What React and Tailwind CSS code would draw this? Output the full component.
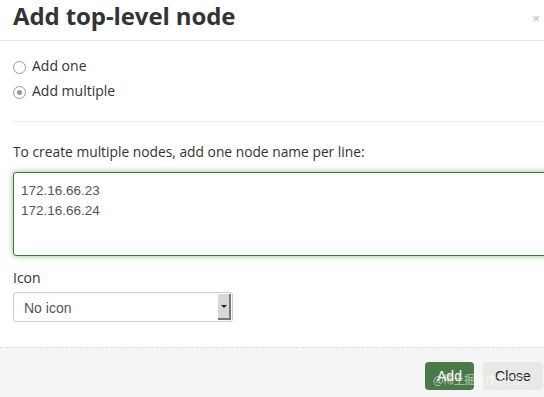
import React from 'react';

export default function App() {
  return (
    <div className="w-[544px] h-[397px] overflow-hidden bg-white text-[#333]" style={{ fontFamily: '"Open Sans", sans-serif' }}>
      <div className="w-[580px]">
        {/* Header */}
        <div className="h-[41px] border-b border-[#e5e5e5] flex items-center justify-between pl-[13px] pr-[40px]">
          <h1 className="text-[24px] font-bold leading-none tracking-[-0.1px] text-[#333] -mt-[8px]">Add top-level node</h1>
          <span className="text-[13px] text-[#c8c8c8] font-bold leading-none -mt-[4px]">×</span>
        </div>

        {/* Body */}
        <div className="pl-[13px] pt-[15px]">
          <div className="flex flex-col gap-[7px] text-[14px] text-[#333]">
            <label className="flex items-center gap-[6px] h-[18px]">
              <span className="w-[13px] h-[13px] rounded-full border border-[#999] bg-white mt-[4px]" />
              <span>Add one</span>
            </label>
            <label className="flex items-center gap-[6px] h-[18px]">
              <span className="w-[13px] h-[13px] rounded-full border border-[#999] bg-white flex items-center justify-center mt-[4px]">
                <span className="w-[5px] h-[5px] rounded-full bg-[#999]" />
              </span>
              <span>Add multiple</span>
            </label>
          </div>

          <div className="mt-[22px] border-t border-[#eee]" />

          <p className="text-[13.8px] mt-[20px] leading-[20px]">To create multiple nodes, add one node name per line:</p>

          <div
            className="mt-[10px] h-[84px] rounded-[3px] border border-[#3c763d] px-[7px] pt-[8px] text-[13.5px] leading-[20px] text-[#555] shadow-[0_0_6px_#8fbf8f]"
            style={{ fontFamily: '"Liberation Sans", Arial, sans-serif' }}
          >
            <div>172.16.66.23</div>
            <div>172.16.66.24</div>
          </div>

          <p className="text-[14px] mt-[12px] leading-[20px]">Icon</p>

          <div className="mt-[4px] w-[220px] h-[30px] flex rounded-[3px] border border-[#ccc] bg-white" style={{ fontFamily: '"Liberation Sans", Arial, sans-serif' }}>
            <div className="flex-1 flex items-center pl-[10px] pt-[3px] text-[14px] text-[#555]">No icon</div>
            <div className="w-[13px] my-[1px] mr-[1px] bg-[#d8d8d8] border-r-2 border-b-2 border-[#777] flex items-center justify-center">
              <span className="w-0 h-0 border-l-[3px] border-r-[3px] border-t-[3px] border-l-transparent border-r-transparent border-t-[#222]" />
            </div>
          </div>
        </div>

        {/* Footer */}
        <div className="mt-[25px] border-t border-dashed border-[#ddd] bg-[#f5f5f5] h-[60px] flex items-start pl-[425px] pt-[14px] gap-[9px] relative" style={{ fontFamily: '"Liberation Sans", Arial, sans-serif' }}>
          <button className="w-[49px] h-[28px] rounded-[4px] bg-[#4a7a4a] text-white text-[14px] flex items-center justify-center">Add</button>
          <button className="w-[60px] h-[28px] rounded-[4px] bg-[#e8e8e6] text-[#222] text-[14px] flex items-center justify-center">Close</button>
          <span className="absolute left-[433px] top-[23px] text-[11px] text-white/60 tracking-[-0.5px]" style={{ fontFamily: '"Noto Sans CJK SC", sans-serif' }}>@稀土掘金技术社区</span>
        </div>
      </div>
    </div>
  );
}
